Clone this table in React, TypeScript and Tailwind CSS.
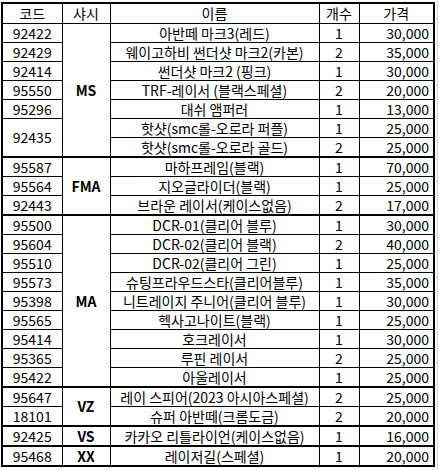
type Item = { code?: string; span?: number; name: string; qty: number; price: string };
type Group = { chassis: string; items: Item[] };

const groups: Group[] = [
  {
    chassis: "MS",
    items: [
      { code: "92422", name: "아반떼 마크3(레드)", qty: 1, price: "30,000" },
      { code: "92429", name: "웨이고하비 썬더샷 마크2(카본)", qty: 2, price: "35,000" },
      { code: "92414", name: "썬더샷 마크2 (핑크)", qty: 1, price: "30,000" },
      { code: "95550", name: "TRF-레이서 (블랙스페셜)", qty: 2, price: "20,000" },
      { code: "95296", name: "대쉬 앰퍼러", qty: 1, price: "13,000" },
      { code: "92435", span: 2, name: "핫샷(smc롤-오로라 퍼플)", qty: 1, price: "25,000" },
      { name: "핫샷(smc롤-오로라 골드)", qty: 2, price: "25,000" },
    ],
  },
  {
    chassis: "FMA",
    items: [
      { code: "95587", name: "마하프레임(블랙)", qty: 1, price: "70,000" },
      { code: "95564", name: "지오글라이더(블랙)", qty: 1, price: "25,000" },
      { code: "92443", name: "브라운 레이서(케이스없음)", qty: 2, price: "17,000" },
    ],
  },
  {
    chassis: "MA",
    items: [
      { code: "95500", name: "DCR-01(클리어 블루)", qty: 1, price: "30,000" },
      { code: "95604", name: "DCR-02(클리어 블랙)", qty: 2, price: "40,000" },
      { code: "95510", name: "DCR-02(클리어 그린)", qty: 1, price: "25,000" },
      { code: "95573", name: "슈팅프라우드스타(클리어블루)", qty: 1, price: "35,000" },
      { code: "95398", name: "니트레이지 주니어(클리어 블루)", qty: 1, price: "30,000" },
      { code: "95565", name: "헥사고나이트(블랙)", qty: 1, price: "25,000" },
      { code: "95414", name: "호크레이서", qty: 1, price: "30,000" },
      { code: "95365", name: "루핀 레이서", qty: 2, price: "25,000" },
      { code: "95422", name: "아울레이서", qty: 1, price: "25,000" },
    ],
  },
  {
    chassis: "VZ",
    items: [
      { code: "95647", name: "레이 스피어(2023 아시아스페셜)", qty: 2, price: "25,000" },
      { code: "18101", name: "슈퍼 아반떼(크롬도금)", qty: 2, price: "20,000" },
    ],
  },
  { chassis: "VS", items: [{ code: "92425", name: "카카오 리틀라이언(케이스없음)", qty: 1, price: "16,000" }] },
  { chassis: "XX", items: [{ code: "95468", name: "레이저길(스페셜)", qty: 1, price: "20,000" }] },
];

export default function App() {
  return (
    <div
      className="w-[438px] h-[470px] bg-white border-r border-[#dadada] pl-px pt-[2px] text-[14px] text-black"
      style={{ fontFamily: '"Noto Sans CJK KR", "Noto Sans", sans-serif' }}
    >
      <table className="table-fixed border-collapse border-2 border-black w-[432px]">
        <colgroup>
          <col className="w-[60px]" />
          <col className="w-[48px]" />
          <col className="w-[209px]" />
          <col className="w-[40px]" />
          <col className="w-[75px]" />
        </colgroup>
        <thead>
          <tr>
            {["코드", "샤시", "이름", "개수", "가격"].map((h) => (
              <th key={h} className="border border-black h-[20px] p-0 font-normal leading-[18px] text-center">
                {h}
              </th>
            ))}
          </tr>
        </thead>
        <tbody>
          {groups.map((g, gi) =>
            g.items.map((it, i) => {
              const top = gi > 0 && i === 0 ? "border-t-2" : "";
              return (
                <tr key={`${g.chassis}-${i}`} className="h-[19px]">
                  {it.code && (
                    <td rowSpan={it.span ?? 1} className={`border border-black p-0 leading-[18px] text-center ${top}`}>
                      {it.code}
                    </td>
                  )}
                  {i === 0 && (
                    <td rowSpan={g.items.length} className={`border border-black p-0 leading-[18px] text-center font-bold ${top}`}>
                      {g.chassis}
                    </td>
                  )}
                  <td className={`border border-black p-0 leading-[18px] text-center whitespace-nowrap ${top}`}>{it.name}</td>
                  <td className={`border border-black p-0 leading-[18px] text-center ${top}`}>{it.qty}</td>
                  <td className={`border border-black p-0 pr-[4px] leading-[18px] text-right ${top}`}>{it.price}</td>
                </tr>
              );
            })
          )}
        </tbody>
      </table>
    </div>
  );
}
